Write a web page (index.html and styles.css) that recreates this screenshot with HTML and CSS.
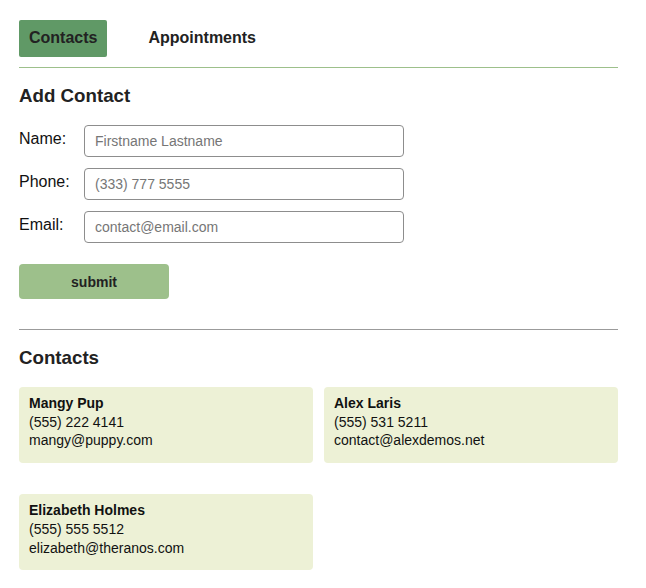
FILE: index.html
```html
<!DOCTYPE html>
<html>
<head>
<meta charset="utf-8">
<link rel="stylesheet" href="styles.css">
</head>
<body>
<div class="app">
  <nav class="nav">
    <a class="tab active">Contacts</a>
    <a class="tab">Appointments</a>
  </nav>
  <hr class="rule green">
  <h3 class="title">Add Contact</h3>
  <form class="form">
    <label class="label">Name:</label>
    <input class="field" type="text" placeholder="Firstname Lastname">
    <label class="label">Phone:</label>
    <input class="field" type="text" placeholder="(333) 777 5555">
    <label class="label">Email:</label>
    <input class="field" type="text" placeholder="contact@email.com">
  </form>
  <button class="submit" type="button">submit</button>
  <hr class="rule gray">
  <h3 class="title">Contacts</h3>
  <div class="cards">
    <div class="card">
      <div class="name">Mangy Pup</div>
      <div>(555) 222 4141</div>
      <div>mangy@puppy.com</div>
    </div>
    <div class="card">
      <div class="name">Alex Laris</div>
      <div>(555) 531 5211</div>
      <div>contact@alexdemos.net</div>
    </div>
    <div class="card">
      <div class="name">Elizabeth Holmes</div>
      <div>(555) 555 5512</div>
      <div>elizabeth@theranos.com</div>
    </div>
  </div>
</div>
</body>
</html>
```
FILE: styles.css
```css
* { box-sizing: border-box; }
body {
  margin: 0;
  background: #fff;
  font-family: "Liberation Sans", Arial, Helvetica, sans-serif;
  color: #111;
}
.app {
  width: 599px;
  margin-left: 19px;
  padding-top: 20px;
}
.nav {
  display: flex;
  gap: 31px;
}
.tab {
  display: block;
  padding: 8px 10px 10px;
  line-height: 19px;
  font-size: 16px;
  font-weight: bold;
  color: #222;
  border-radius: 2px;
}
.tab.active {
  background: #609966;
}
.rule {
  border: 0;
  height: 1px;
  margin: 10px 0 0;
}
.rule.green { background: #9dc08b; }
.rule.gray { background: #9b9b9b; margin-top: 30px; }
.title {
  margin: 17px 0 18px;
  font-size: 18.72px;
  line-height: normal;
  font-weight: bold;
  color: #222;
}
.form {
  display: grid;
  grid-template-columns: 65px 320px;
  row-gap: 11px;
  margin: 0;
}
.label {
  font-size: 16px;
  padding-top: 5px;
  color: #111;
}
.field {
  height: 32px;
  border: 1px solid #8d8d8d;
  border-radius: 4px;
  padding: 0 10px;
  font-family: "Liberation Sans", Arial, sans-serif;
  font-size: 14px;
  color: #111;
  background: #fff;
}
.field::placeholder { color: #767676; }
.submit {
  display: block;
  margin-top: 21px;
  width: 150px;
  height: 35px;
  border: 0;
  border-radius: 4px;
  background: #9dc08b;
  font-family: "Liberation Sans", Arial, sans-serif;
  font-size: 14px;
  font-weight: bold;
  color: #222;
}
.cards {
  display: grid;
  grid-template-columns: 1fr 1fr;
  column-gap: 11px;
  row-gap: 31px;
}
.card {
  background: #edf1d6;
  border-radius: 4px;
  padding: 7px 10px 13px;
  font-size: 14px;
  line-height: 18.7px;
  color: #111;
}
.name { font-weight: bold; }
```
